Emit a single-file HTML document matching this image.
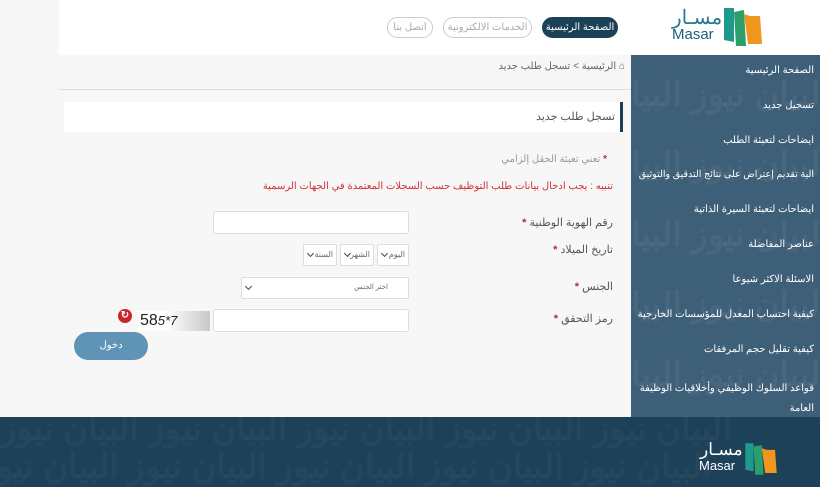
<!DOCTYPE html>
<html><head><meta charset="utf-8"><style>
*{margin:0;padding:0;box-sizing:border-box}
body{width:832px;height:487px;overflow:hidden;background:#f7f7f7;font-family:"Liberation Sans","Noto Sans CJK SC",sans-serif;position:relative;direction:ltr}
.abs{position:absolute}
.header{left:59px;top:0;width:761px;height:55px;background:#fff}
.right{left:820px;top:0;width:12px;height:487px;background:#fff}
.btn{position:absolute;top:17px;height:21px;border-radius:11px;font-size:10px;line-height:19px;text-align:center;direction:rtl}
.side{left:631px;top:55px;width:189px;height:362px;background:#3e5f78;overflow:hidden}
.side .it{position:absolute;right:6px;color:#fff;font-size:10px;direction:rtl;text-align:right;width:185px;line-height:20px;letter-spacing:-0.2px}
.foot{left:0;top:417px;width:820px;height:70px;background:#1c4159;overflow:hidden}
.wm{position:absolute;color:rgba(255,255,255,0.05);font-size:34px;font-weight:bold;white-space:nowrap;direction:rtl}
.lbl{position:absolute;font-size:10px;color:#555;direction:rtl;text-align:right;white-space:nowrap}
.lbl b{color:#c0282d}
.inp{position:absolute;background:#fff;border:1px solid #ddd;border-radius:3px}
.sel{position:absolute;background:#fff;border:1px solid #ddd;border-radius:2px;font-size:8px;color:#666;direction:rtl;padding:0 3px;line-height:20px}
.sel i{position:absolute;left:4px;top:6px;width:5px;height:5px;border-right:1.5px solid #444;border-bottom:1.5px solid #444;transform:rotate(45deg)}
</style></head><body>
<div class="abs header"></div>
<div class="abs right"></div>
<div class="abs" style="left:672px;top:9px;font-size:20px;color:#2a7a90;direction:rtl;line-height:18px">مسـار</div>
<div class="abs" style="left:672px;top:27px;font-size:15px;color:#1d5f7a;line-height:16px">Masar</div>
<svg class="abs" style="left:720px;top:6px" width="46" height="42" viewBox="0 0 46 42"><polygon points="4,2 14,2 14,36 4,34" fill="#1e9a8c"/><polygon points="14,6 24,4 26,40 16,40" fill="#2a9f6a"/><polygon points="24,8 30,10 40,10 42,38 28,38" fill="#f0961c"/></svg>
<div class="btn" style="left:542px;width:76px;background:#1b4158;color:#fff;border:1px solid #1b4158">الصفحة الرئيسية</div>
<div class="btn" style="left:443px;width:89px;border:1px solid #ccc;color:#aaa">الخدمات الالكترونية</div>
<div class="btn" style="left:387px;width:46px;border:1px solid #ccc;color:#aaa">اتصل بنا</div>
<div class="abs" style="left:59px;top:89px;width:572px;height:1px;background:#ddd"></div>
<div class="abs" style="left:380px;top:61px;width:245px;font-size:10px;color:#666;direction:rtl;text-align:right">&#8962; الرئيسية &gt; تسجل طلب جديد</div>
<div class="abs" style="left:64px;top:102px;width:556px;height:30px;background:#fff"></div>
<div class="abs" style="left:620px;top:102px;width:3px;height:30px;background:#1b4158"></div>
<div class="abs" style="left:400px;top:110px;width:215px;font-size:11px;color:#555;direction:rtl;text-align:right">تسجل طلب جديد</div>
<div class="lbl" style="left:400px;top:154px;width:207px;color:#999"><b>*</b> تعني تعبئة الحقل إلزامي</div>
<div class="lbl" style="left:200px;top:181px;width:413px;color:#d0302f;font-size:10px">تنبيه : يجب ادخال بيانات طلب التوظيف حسب السجلات المعتمدة في الجهات الرسمية</div>
<div class="lbl" style="left:480px;top:216px;width:133px;font-size:11px">رقم الهوية الوطنية <b>*</b></div>
<div class="inp" style="left:213px;top:211px;width:196px;height:23px"></div>
<div class="lbl" style="left:480px;top:243px;width:133px;font-size:11px">تاريخ الميلاد <b>*</b></div>
<div class="sel" style="left:377px;top:244px;width:32px;height:22px">اليوم<i></i></div>
<div class="sel" style="left:340px;top:244px;width:34px;height:22px">الشهر<i></i></div>
<div class="sel" style="left:303px;top:244px;width:34px;height:22px">السنة<i></i></div>
<div class="lbl" style="left:480px;top:280px;width:133px;font-size:11px">الجنس <b>*</b></div>
<div class="sel" style="left:241px;top:277px;width:168px;height:22px;font-size:7px;padding-right:20px">اختر الجنس<i></i></div>
<div class="lbl" style="left:480px;top:312px;width:133px;font-size:11px">رمز التحقق <b>*</b></div>
<div class="inp" style="left:213px;top:309px;width:196px;height:23px"></div>
<div class="abs" style="left:138px;top:311px;width:72px;height:20px;background:linear-gradient(90deg,#fff 40%,#c8c8c8)"></div>
<div class="abs" style="left:140px;top:311px;font-size:16px;color:#222;line-height:20px">58<span style="font-size:13px;font-style:italic">5*7</span></div>
<div class="abs" style="left:118px;top:309px;width:14px;height:14px;border-radius:50%;background:#c9252c;color:#fff;font-size:10px;line-height:14px;text-align:center;font-weight:bold">↻</div>
<div class="abs" style="left:74px;top:332px;width:74px;height:28px;border-radius:14px;background:#5f94b6;color:#fff;font-size:10px;line-height:27px;text-align:center">دخول</div>
<div class="abs side">
<div class="wm" style="right:-10px;top:20px">البيان نيوز البيان</div>
<div class="wm" style="right:-10px;top:90px">البيان نيوز البيان</div>
<div class="wm" style="right:-10px;top:160px">البيان نيوز البيان</div>
<div class="wm" style="right:-10px;top:230px">البيان نيوز البيان</div>
<div class="wm" style="right:-10px;top:300px">البيان نيوز البيان</div>
<div class="it" style="top:6px">الصفحة الرئيسية</div>
<div class="it" style="top:41px">تسجيل جديد</div>
<div class="it" style="top:76px">ايضاحات لتعبئة الطلب</div>
<div class="it" style="top:110px;font-size:9.5px;letter-spacing:-0.4px">الية تقديم إعتراض على نتائج التدقيق والتوثيق</div>
<div class="it" style="top:145px">ايضاحات لتعبئة السيرة الذاتية</div>
<div class="it" style="top:180px">عناصر المفاضلة</div>
<div class="it" style="top:215px">الاسئلة الاكثر شيوعا</div>
<div class="it" style="top:250px">كيفية احتساب المعدل للمؤسسات الخارجية</div>
<div class="it" style="top:285px">كيفية تقليل حجم المرفقات</div>
<div class="it" style="top:324px">قواعد السلوك الوظيفي وأخلاقيات الوظيفة العامة</div>
</div>
<div class="abs foot">
<div class="wm" style="left:0;top:-8px;color:rgba(255,255,255,0.035)">البيان نيوز البيان نيوز البيان نيوز البيان نيوز البيان نيوز</div>
<div class="wm" style="left:-20px;top:30px;color:rgba(255,255,255,0.035)">البيان نيوز البيان نيوز البيان نيوز البيان نيوز البيان نيوز</div>
<div class="abs" style="left:700px;top:25px;font-size:17px;color:#fff;direction:rtl;line-height:16px">مسـار</div>
<div class="abs" style="left:699px;top:42px;font-size:13px;color:#fff;line-height:14px">Masar</div>
<svg class="abs" style="left:742px;top:24px" width="38" height="36" viewBox="0 0 46 42"><polygon points="4,2 14,2 14,36 4,34" fill="#1e9a8c"/><polygon points="14,6 24,4 26,40 16,40" fill="#2a9f6a"/><polygon points="24,8 30,10 40,10 42,38 28,38" fill="#f0961c"/></svg>
</div>
</body></html>
